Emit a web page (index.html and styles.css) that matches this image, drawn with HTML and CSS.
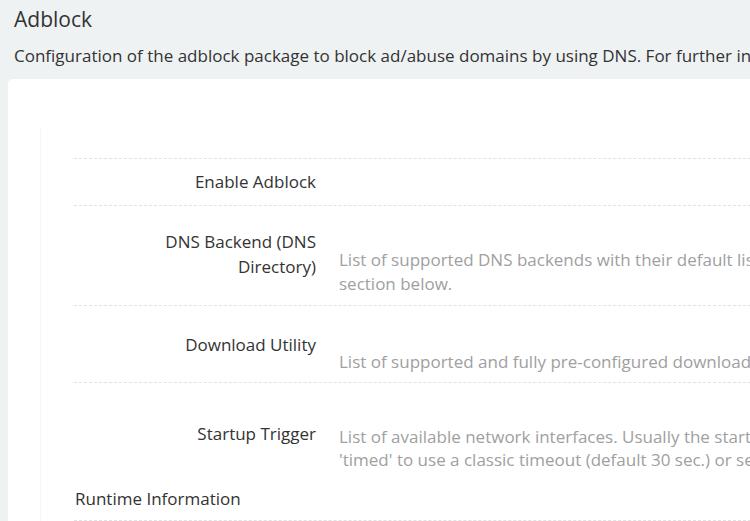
FILE: index.html
```html
<!DOCTYPE html>
<html lang="en">
<head>
<meta charset="utf-8">
<title>Adblock</title>
<link rel="stylesheet" href="styles.css">
</head>
<body>
<div class="page">
  <header class="head">
    <h2 class="title">Adblock</h2>
    <p class="intro">Configuration of the adblock package to block ad/abuse domains by using DNS. For further information please check the online documentation.</p>
  </header>
  <div class="card">
    <div class="section">
      <div class="row row-enable">
        <div class="label">Enable Adblock</div>
        <div class="value"></div>
      </div>
      <div class="row row-dns">
        <div class="label">DNS Backend (DNS<br>Directory)</div>
        <div class="value"><p class="desc">List of supported DNS backends with their default list export directory. To overwrite the default path use the 'DNS Directory' option in the extra<br>section below.</p></div>
      </div>
      <div class="row row-dl">
        <div class="label">Download Utility</div>
        <div class="value"><p class="desc">List of supported and fully pre-configured download utilities.</p></div>
      </div>
      <div class="row row-trigger">
        <div class="label">Startup Trigger</div>
        <div class="value"><p class="desc">List of available network interfaces. Usually the startup will be triggered by the 'wan' interface. Choose 'none' to disable this trigger,<br>'timed' to use a classic timeout (default 30 sec.) or select another trigger interface.</p></div>
      </div>
    </div>
    <div class="runtime">
      <h3 class="runtime-title">Runtime Information</h3>
      <div class="runtime-body"></div>
    </div>
  </div>
</div>
</body>
</html>
```
FILE: styles.css
```css
html, body {
  margin: 0;
  padding: 0;
  background: #eff2f3;
  overflow: hidden;
}
.page {
  width: 1400px;
  font-family: "Open Sans", "Noto Sans", sans-serif;
  color: #333;
}
.head {
  padding: 0 0 0 14px;
}
.title {
  margin: 0;
  padding-top: 4px;
  font-size: 21px;
  font-weight: 400;
  line-height: 30px;
  color: #333;
}
.intro {
  margin: 9px 0 0;
  font-size: 17px;
  line-height: 26px;
  white-space: nowrap;
  color: #333;
}
.card {
  margin: 10px 0 0 8px;
  background: #fff;
  border-radius: 5px 0 0 0;
  padding-top: 49px;
  min-height: 500px;
}
.section {
  margin-left: 32px;
  border-left: 1px solid #f4f6f6;
  padding: 30px 0 15px 33px;
}
.row {
  display: grid;
  grid-template-columns: 242px 1fr;
  column-gap: 23px;
  border-top: 1px dashed #e2e2e2;
  font-size: 17px;
}
.label {
  text-align: right;
  line-height: 25px;
  color: #333;
}
.desc {
  margin: 0;
  line-height: 24px;
  color: #a0a0a0;
  white-space: nowrap;
}
.row-enable { padding: 10px 0 11px; }
.row-dns { padding: 23px 0 9px; }
.row-dns .desc { margin-top: 19px; }
.row-dl { padding: 26px 0 8px; }
.row-dl .desc { margin-top: 18px; }
.row-trigger { padding: 38px 0 0; }
.row-trigger .desc { margin-top: 4px; line-height: 23px; }
.runtime {
  margin-left: 32px;
  border-left: 1px solid #f4f6f6;
  padding-left: 34px;
}
.runtime-title {
  margin: 0;
  font-size: 17px;
  font-weight: 400;
  line-height: 25px;
  padding-bottom: 9px;
  color: #333;
}
.runtime-body {
  border-top: 1px dashed #e2e2e2;
  margin-left: -1px;
  height: 40px;
}
```
